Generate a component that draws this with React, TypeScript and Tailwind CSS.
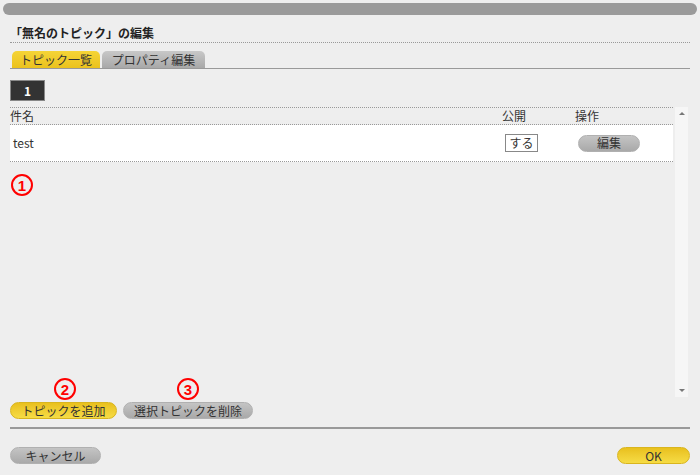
const font = { fontFamily: '"Noto Sans CJK JP", "Liberation Sans", sans-serif' };

function PillButton({ label, yellow, className }: { label: string; yellow?: boolean; className: string }) {
  return (
    <button
      className={
        (yellow
          ? 'bg-gradient-to-b from-[#e9c01c] to-[#f6dc44] border-[#d9b51e] '
          : 'bg-gradient-to-b from-[#c4c4c4] to-[#a9a9a9] border-[#b0b0b0] ') +
        'flex items-center justify-center rounded-full border text-[12px] leading-none text-[#333] ' +
        className
      }
    >
      {label}
    </button>
  );
}

// red circled number marker
function Circled({ n, className }: { n: string; className: string }) {
  return (
    <div
      className={
        'flex h-[22px] w-[22px] items-center justify-center rounded-full border-2 border-[#ff0000] ' + className
      }
    >
      <span
        className="text-[15px] font-bold leading-none text-[#ff0000]"
        style={{ fontFamily: '"Liberation Sans", sans-serif' }}
      >
        {n}
      </span>
    </div>
  );
}

export default function App() {
  return (
    <div className="relative h-[475px] w-[700px] overflow-hidden bg-[#eeeeee] text-[#333]" style={font}>
      <div className="mx-[3px] mt-[3px] h-[12px] rounded-full bg-[#9a9a9a]" />

      <div className="px-[10px]">
        <div className="mt-[10px] flex h-[18px] items-center border-b border-dotted border-[#999] pb-[2px] text-[12px] font-bold text-[#222]">
          「無名のトピック」の編集
        </div>

        <div className="mt-[8px] flex h-[18px] items-end gap-[2px] border-b border-[#999] pl-[2px]">
          <div className="flex h-[17px] w-[88px] items-center justify-center rounded-t-[5px] bg-gradient-to-b from-[#f5d436] to-[#ebc21d] text-[12px] leading-none">
            トピック一覧
          </div>
          <div className="flex h-[17px] w-[103px] items-center justify-center rounded-t-[5px] bg-gradient-to-b from-[#c8c8c8] to-[#a8a8a8] text-[12px] leading-none">
            プロパティ編集
          </div>
        </div>

        <div className="mt-[11px] flex h-[21px] w-[35px] items-center justify-center border border-[#888] bg-[#333] text-[12px] font-bold text-white">
          1
        </div>

        <div className="mt-[6px] flex h-[290px]">
          <div className="flex-1 border-t border-dotted border-[#999]">
            <div className="flex h-[17px] items-center border-b border-dotted border-[#999] text-[12px] leading-none">
              <div className="flex-1">件名</div>
              <div className="w-[73px]">公開</div>
              <div className="w-[98px]">操作</div>
            </div>
            <div className="flex h-[37px] items-center border-b border-dotted border-[#999] bg-white text-[12px] leading-none">
              <div className="flex-1 pl-[3px]">test</div>
              <div className="w-[73px] pl-[3px]">
                <div className="flex h-[18px] w-[33px] items-center justify-center border border-[#888] bg-white">する</div>
              </div>
              <div className="w-[98px] pl-[3px]">
                <PillButton label="編集" className="h-[17px] w-[62px]" />
              </div>
            </div>
            <Circled n="1" className="mt-[12px] ml-[1px]" />
          </div>
          <div className="ml-[2px] mr-[2px] flex w-[13px] flex-col items-center justify-between bg-[#f6f6f6] py-[5px]">
            <div className="h-0 w-0 border-x-[3px] border-b-[3px] border-x-transparent border-b-[#777]" />
            <div className="h-0 w-0 border-x-[3px] border-t-[3px] border-x-transparent border-t-[#777]" />
          </div>
        </div>

        <div className="-mt-[19px] flex">
          <Circled n="2" className="ml-[44px]" />
          <Circled n="3" className="ml-[101px]" />
        </div>

        <div className="mt-[2px] flex gap-[6px]">
          <PillButton label="トピックを追加" yellow className="h-[17px] w-[107px]" />
          <PillButton label="選択トピックを削除" className="h-[17px] w-[130px]" />
        </div>

        <div className="mt-[8px] border-t-2 border-[#999]" />

        <div className="mt-[18px] flex justify-between">
          <PillButton label="キャンセル" className="h-[17px] w-[91px]" />
          <PillButton label="OK" yellow className="h-[17px] w-[73px]" />
        </div>
      </div>
    </div>
  );
}
